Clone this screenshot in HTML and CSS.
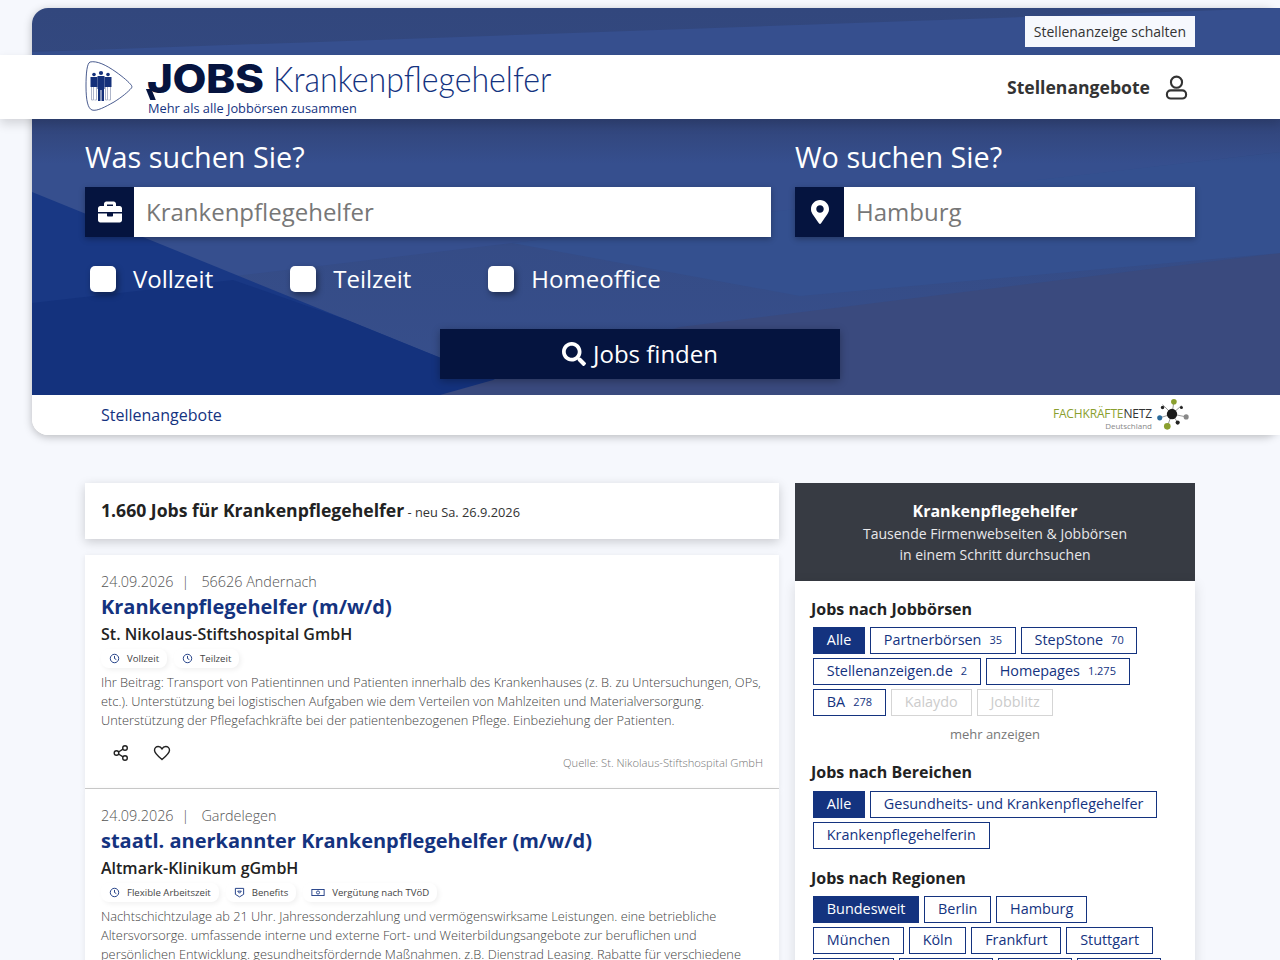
FILE: index.html
```html
<!DOCTYPE html>
<html lang="de">
<head>
<meta charset="utf-8">
<title>Jobs Krankenpflegehelfer</title>
<link rel="stylesheet" href="styles.css">
</head>
<body>
<div class="hero">
  <svg class="hero-bg" viewBox="32 8 1248 387" preserveAspectRatio="none" aria-hidden="true">
    <defs>
      <linearGradient id="top" x1="0" y1="0" x2="0" y2="1"><stop offset="0" stop-color="#32477d"/><stop offset="1" stop-color="#374f8c"/></linearGradient>
      <linearGradient id="fade" x1="0" y1="0" x2="0" y2="1"><stop offset="0" stop-color="#2f3f6f" stop-opacity=".7"/><stop offset="1" stop-color="#2f3f6f" stop-opacity="0"/></linearGradient>
    </defs>
    <rect x="32" y="8" width="1248" height="387" fill="url(#top)"/>
    <polygon points="32,52 1280,8 1280,152 32,300" fill="#364f8e"/>
    <polygon points="32,192 532,395 32,395" fill="#193884"/>
    <polygon points="32,303 233,280 347,320 532,395 32,395" fill="#14327d"/>
    <polygon points="1280,253 680,327 440,395 1280,395" fill="#3a4a7e"/>
    <polygon points="1280,152 1012,183 512,243 800,296 1280,253" fill="#34508f"/>
    <rect x="32" y="119" width="1248" height="45" fill="url(#fade)"/>
  </svg>
  <div class="topbar"><a class="post-btn">Stellenanzeige schalten</a></div>
  <header class="masthead">
    <div class="brand">
      <svg class="brand-icon" viewBox="0 0 48 50" aria-hidden="true">
        <path d="M5 1C12-.5 21 4 31 11c7 5 13 10 15.500 13.500.5 1 .5 1.500 0 2.500C43 31 37 36 29 41 20 46 12 50.500 7 49 3 47.500 1 40 1 25 1 12 2 2.500 5 1z" fill="#fff" stroke="#1c3272" stroke-width=".8"/>
        <g fill="#14307a">
          <circle cx="9" cy="13.500" r="1.800"/><path d="M5.500 16h7v10h-7z"/>
          <circle cx="23" cy="13.500" r="1.800"/><path d="M19.500 16h7v10h-7z"/>
          <circle cx="16" cy="12" r="2.100"/><path d="M12.500 15h7v13h-.5v12h-2.500V29h-1v11H13V28h-.5z"/>
        </g>
        <g fill="none" stroke="#9aa3bd" stroke-width=".8"><path d="M6.500 26v13h2v-13M9.500 39h2V26M20.500 26v13h2V26M23.500 39h2V26"/></g>
      </svg>
      <div class="brand-text">
        <div class="brand-line"><span class="brand-jobs">JOBS</span><span class="brand-name">Krankenpflegehelfer</span></div>
        <div class="brand-sub">Mehr als alle Jobbörsen zusammen</div>
      </div>
    </div>
    <nav class="mast-nav">
      <a class="mast-link">Stellenangebote</a>
      <svg class="user-icon" viewBox="0 0 24 26" aria-hidden="true"><circle cx="12" cy="7.500" r="5.800" fill="none" stroke="#333" stroke-width="2.200"/><rect x="2" y="16" width="20" height="8.500" rx="4" fill="none" stroke="#333" stroke-width="2.200"/></svg>
    </nav>
  </header>
  <section class="search">
    <div class="search-fields">
      <div class="field field-what">
        <label class="field-label">Was suchen Sie?</label>
        <div class="input-row">
          <span class="input-icon"><svg viewBox="0 0 512 512" width="24" height="24" aria-hidden="true"><path fill="#fff" d="M320 336c0 8.840-7.160 16-16 16h-96c-8.840 0-16-7.160-16-16v-48H0v144c0 25.600 22.400 48 48 48h416c25.600 0 48-22.400 48-48V288H320v48zm144-208h-80V80c0-25.600-22.400-48-48-48H176c-25.600 0-48 22.400-48 48v48H48c-25.600 0-48 22.400-48 48v80h512v-80c0-25.600-22.400-48-48-48zm-144 0H192V96h128v32z"/></svg></span>
          <span class="input-text">Krankenpflegehelfer</span>
        </div>
      </div>
      <div class="field field-where">
        <label class="field-label">Wo suchen Sie?</label>
        <div class="input-row">
          <span class="input-icon"><svg viewBox="0 0 384 512" width="18" height="24" aria-hidden="true"><path fill="#fff" d="M172.268 501.670C26.970 291.031 0 269.413 0 192 0 85.961 85.961 0 192 0s192 85.961 192 192c0 77.413-26.970 99.031-172.268 309.670-9.535 13.774-29.930 13.773-39.464 0zM192 272c44.183 0 80-35.817 80-80s-35.817-80-80-80-80 35.817-80 80 35.817 80 80 80z"/></svg></span>
          <span class="input-text">Hamburg</span>
        </div>
      </div>
    </div>
    <div class="checks">
      <div class="check"><span class="box"></span><span>Vollzeit</span></div>
      <div class="check"><span class="box"></span><span>Teilzeit</span></div>
      <div class="check"><span class="box"></span><span>Homeoffice</span></div>
    </div>
    <div class="submit-row">
      <button class="submit"><svg viewBox="0 0 512 512" width="24" height="24" aria-hidden="true"><path fill="#fff" d="M505 442.700L405.300 343c-4.500-4.500-10.600-7-17-7H372c27.600-35.300 44-79.700 44-128C416 93.100 322.900 0 208 0S0 93.100 0 208s93.100 208 208 208c48.300 0 92.700-16.400 128-44v16.300c0 6.400 2.500 12.500 7 17l99.700 99.700c9.400 9.400 24.600 9.400 33.900 0l28.300-28.300c9.400-9.400 9.400-24.600.1-34zM208 336c-70.700 0-128-57.200-128-128 0-70.700 57.200-128 128-128 70.700 0 128 57.200 128 128 0 70.700-57.200 128-128 128z"/></svg><span class="submit-label">Jobs finden</span></button>
    </div>
  </section>
  <div class="subnav">
    <a class="subnav-link">Stellenangebote</a>
    <div class="partner">
      <div class="partner-text"><div class="partner-name"><span class="green">FACHKRÄFTE</span>NETZ</div><div class="partner-sub">Deutschland</div></div>
      <svg class="partner-icon" viewBox="0 0 36 36" aria-hidden="true">
        <g stroke="#777" stroke-width=".8"><path d="M18 17L20 4M18 17L33 20M18 17L5 21M18 17L13 30M18 17L8 7M18 17L28 8M18 17L24 26"/></g>
        <circle cx="18" cy="17" r="5.500" fill="#1a1a1a"/><circle cx="20" cy="4" r="3" fill="#8a9f2e"/><circle cx="33" cy="20" r="2.700" fill="#888"/><circle cx="5" cy="21" r="2.700" fill="#2a6a9a"/><circle cx="13" cy="30" r="3.500" fill="#8a9f2e"/><circle cx="8" cy="10" r="1.800" fill="#222"/><circle cx="28" cy="10" r="1.600" fill="#222"/><circle cx="24" cy="26" r="2.200" fill="#222"/>
      </svg>
    </div>
  </div>
</div>

<main class="content">
  <div class="results">
    <div class="results-head"><strong>1.660 Jobs für Krankenpflegehelfer</strong><span class="results-new"> - neu Sa. 26.9.2026</span></div>
    <article class="job">
      <div class="job-meta"><span>24.09.2026</span><span class="sep">|</span><span>56626 Andernach</span></div>
      <h2 class="job-title">Krankenpflegehelfer (m/w/d)</h2>
      <div class="job-company">St. Nikolaus-Stiftshospital GmbH</div>
      <div class="tags">
        <span class="tag"><svg class="tag-icon" viewBox="0 0 12 12"><circle cx="6" cy="6" r="4.600"/><path d="M6 3.200V6l2 1.200"/></svg>Vollzeit</span>
        <span class="tag"><svg class="tag-icon" viewBox="0 0 12 12"><circle cx="6" cy="6" r="4.600"/><path d="M6 3.200V6l2 1.200"/></svg>Teilzeit</span>
      </div>
      <p class="job-desc">Ihr Beitrag: Transport von Patientinnen und Patienten innerhalb des Krankenhauses (z. B. zu Untersuchungen, OPs, etc.). Unterstützung bei logistischen Aufgaben wie dem Verteilen von Mahlzeiten und Materialversorgung. Unterstützung der Pflegefachkräfte bei der patientenbezogenen Pflege. Einbeziehung der Patienten.</p>
      <div class="job-foot">
        <div class="job-actions">
          <svg class="act-icon" viewBox="0 0 18 18"><circle cx="13" cy="4" r="2.300"/><circle cx="4.500" cy="9" r="2.300"/><circle cx="13" cy="14" r="2.300"/><path d="M6.500 8l4.500-2.800M6.500 10l4.500 2.800"/></svg>
          <svg class="act-icon" viewBox="0 0 18 18"><path d="M9 15.500C4 11.500 1.500 9.300 1.500 6.300 1.500 4 3.300 2.500 5.200 2.500 6.800 2.500 8.200 3.300 9 4.800 9.800 3.300 11.200 2.500 12.800 2.500 14.700 2.500 16.500 4 16.500 6.300 16.500 9.300 14 11.500 9 15.500z"/></svg>
        </div>
        <div class="job-source">Quelle: St. Nikolaus-Stiftshospital GmbH</div>
      </div>
    </article>
    <article class="job">
      <div class="job-meta"><span>24.09.2026</span><span class="sep">|</span><span>Gardelegen</span></div>
      <h2 class="job-title">staatl. anerkannter Krankenpflegehelfer (m/w/d)</h2>
      <div class="job-company">Altmark-Klinikum gGmbH</div>
      <div class="tags">
        <span class="tag"><svg class="tag-icon" viewBox="0 0 12 12"><circle cx="6" cy="6" r="4.600"/><path d="M6 3.200V6l2 1.200"/></svg>Flexible Arbeitszeit</span>
        <span class="tag"><svg class="tag-icon" viewBox="0 0 12 12"><path d="M1.500 1.500h9v6.500L6 10.800 1.500 8zM4 4.500h4L6 6.800z"/></svg>Benefits</span>
        <span class="tag"><svg class="tag-icon wide" viewBox="0 0 16 12"><rect x="1" y="2.500" width="14" height="7"/><circle cx="8" cy="6" r="1.800"/></svg>Vergütung nach TVöD</span>
      </div>
      <p class="job-desc">Nachtschichtzulage ab 21 Uhr. Jahressonderzahlung und vermögenswirksame Leistungen. eine betriebliche Altersvorsorge. umfassende interne und externe Fort- und Weiterbildungsangebote zur beruflichen und persönlichen Entwicklung. gesundheitsfördernde Maßnahmen. z.B. Dienstrad Leasing. Rabatte für verschiedene</p>
    </article>
  </div>
  <aside class="side">
    <div class="side-head">
      <div class="side-title">Krankenpflegehelfer</div>
      <div>Tausende Firmenwebseiten &amp; Jobbörsen</div>
      <div>in einem Schritt durchsuchen</div>
    </div>
    <div class="side-body">
      <section class="filter">
        <h3 class="filter-title">Jobs nach Jobbörsen</h3>
        <div class="chips">
          <a class="chip active">Alle</a>
          <a class="chip">Partnerbörsen<small>35</small></a>
          <a class="chip">StepStone<small>70</small></a>
          <a class="chip">Stellenanzeigen.de<small>2</small></a>
          <a class="chip">Homepages<small>1.275</small></a>
          <a class="chip">BA<small>278</small></a>
          <a class="chip off">Kalaydo</a>
          <a class="chip off">Jobblitz</a>
        </div>
        <div class="more">mehr anzeigen</div>
      </section>
      <section class="filter filter-areas">
        <h3 class="filter-title">Jobs nach Bereichen</h3>
        <div class="chips">
          <a class="chip active">Alle</a>
          <a class="chip">Gesundheits- und Krankenpflegehelfer</a>
          <a class="chip">Krankenpflegehelferin</a>
        </div>
      </section>
      <section class="filter">
        <h3 class="filter-title">Jobs nach Regionen</h3>
        <div class="chips">
          <a class="chip active">Bundesweit</a>
          <a class="chip">Berlin</a>
          <a class="chip">Hamburg</a>
          <a class="chip">München</a>
          <a class="chip">Köln</a>
          <a class="chip">Frankfurt</a>
          <a class="chip">Stuttgart</a>
          <a class="chip">Bremen</a>
          <a class="chip">Hannover</a>
          <a class="chip">Leipzig</a>
          <a class="chip">Dresden</a>
        </div>
      </section>
    </div>
  </aside>
</main>
</body>
</html>
```
FILE: styles.css
```css
* { box-sizing: border-box; }
html, body { margin: 0; height: 960px; overflow: hidden; }
body { background: #f6f8fd; font-family: "Open Sans", sans-serif; color: #222; padding-top: 8px; }
a { text-decoration: none; color: inherit; }

.hero { position: relative; margin-left: 32px; border-radius: 16px; box-shadow: 0 2px 8px rgba(0,0,0,.25); background: #fff; }
.hero-bg { position: absolute; left: 0; top: 0; width: 100%; height: 387px; border-radius: 16px 0 0 0; display: block; }

.topbar { position: relative; height: 47px; padding: 8px 85px 0 0; display: flex; justify-content: flex-end; align-items: flex-start; }
.post-btn { background: #f6f8fd; height: 31px; padding: 0 9px; font-size: 14px; line-height: 31px; color: #333; }

.masthead { position: relative; z-index: 1; margin-left: -32px; height: 64px; background: #fff; padding: 0 85px; display: flex; justify-content: space-between; align-items: center; box-shadow: 0 5px 10px rgba(0,0,0,.14); }
.brand { display: flex; align-items: flex-start; gap: 14px; }
.brand-icon { width: 48px; height: 50px; flex: none; margin-top: 3px; }
.brand-text { display: flex; flex-direction: column; margin-top: -4px; }
.brand-line { display: flex; align-items: baseline; height: 47px; }
.brand-jobs { position: relative; font-family: "Inter", sans-serif; font-weight: 800; font-size: 40px; line-height: 47px; color: #06143f; letter-spacing: -.4px; transform: translateY(1px) scaleX(1.1); transform-origin: left; width: 126px; flex: none; }
.brand-jobs::before { content: ""; position: absolute; left: 1px; top: 34px; width: 5px; height: 11px; background: #06143f; transform: skewX(20deg); }
.brand-name { font-family: "Lato", sans-serif; font-weight: 300; font-size: 35px; line-height: 47px; color: #14337f; white-space: nowrap; transform: scaleX(.917); transform-origin: left; }
.brand-sub { font-size: 12.800px; line-height: 16px; color: #14337f; margin: -1px 0 0 1px; }
.mast-nav { display: flex; align-items: center; gap: 15px; padding-right: 7px; }
.mast-link { font-size: 17.600px; font-weight: 700; color: #333; }
.user-icon { width: 23px; height: 25px; }

.search { position: relative; height: 276px; padding: 0 85px 0 53px; color: #fff; }
.search-fields { display: flex; gap: 24px; padding-top: 18px; }
.field-what { width: 686px; }
.field-where { width: 400px; }
.field-label { display: block; font-size: 28.800px; line-height: 40px; height: 50px; color: #fff; }
.input-row { display: flex; height: 50px; background: #fff; box-shadow: 0 2px 6px rgba(0,0,0,.3); }
.input-icon { width: 49px; flex: none; background: #05143f; display: flex; align-items: center; justify-content: center; }
.input-text { padding-left: 12px; font-size: 24px; line-height: 50px; color: #777; }
.checks { display: flex; gap: 77px; padding: 25px 0 0 5px; }
.check { display: flex; align-items: center; gap: 17px; font-size: 24px; line-height: 34px; }
.box { width: 26px; height: 26px; background: #fff; border-radius: 5px; box-shadow: 2px 3px 6px rgba(0,0,0,.4); }
.submit-row { display: flex; justify-content: center; padding: 33px 0 0; width: 1110px; }
.submit { width: 400px; height: 50px; padding: 0; background: #05143f; border: 0; color: #fff; font: 24px "Open Sans", sans-serif; display: flex; align-items: center; justify-content: center; gap: 7px; box-shadow: 0 2px 8px rgba(0,0,0,.3); }
.submit-label { margin-top: -2px; }

.subnav { position: relative; height: 40px; padding: 0 91px 0 69px; display: flex; justify-content: space-between; align-items: center; background: #fff; border-radius: 0 0 0 16px; }
.subnav-link { font-size: 16px; color: #14337f; }
.partner { display: flex; align-items: center; gap: 3px; }
.partner-text { text-align: right; line-height: 1; padding-top: 7px; }
.partner-name { font-size: 12px; color: #333; letter-spacing: -.15px; }
.green { color: #8a9f2e; }
.partner-sub { font-size: 8px; color: #888; margin-top: 2px; }
.partner-icon { width: 34px; height: 34px; }

.content { display: flex; gap: 16px; padding: 48px 85px 0; align-items: flex-start; }
.results { width: 694px; flex: none; }
.results-head { height: 56px; background: #fff; padding: 0 16px 2px; margin-bottom: 16px; display: flex; align-items: center; white-space: pre; box-shadow: 0 3px 10px rgba(0,0,0,.18); }
.results-head strong { font-size: 17.600px; font-weight: 700; color: #222; }
.results-new { font-size: 12.800px; color: #333; margin-top: 3px; }
.job { background: #fff; padding: 16px 16px 15px; border-bottom: 1px solid #ccc; height: 234.400px; box-shadow: 0 1px 6px rgba(0,0,0,.08); }
.job-meta { display: flex; font-size: 14.400px; line-height: 22px; color: #555; font-weight: 300; }
.sep { margin: 0 12px 0 8px; }
.job-title { margin: 0; font-size: 20px; line-height: 28.600px; font-weight: 700; color: #14337f; }
.job-company { font-size: 16px; line-height: 25px; font-weight: 600; color: #222; }
.tags { display: flex; gap: 7px; height: 24px; align-items: center; }
.tag { display: flex; align-items: center; gap: 7px; font-size: 9.600px; color: #444; padding: 3px 8px; border-radius: 8px; box-shadow: 2px 2px 5px rgba(0,0,0,.06); white-space: nowrap; }
.tag-icon { width: 11px; height: 11px; fill: none; stroke: #14337f; stroke-width: 1; }
.tag-icon.wide { width: 14px; }
.job-desc { margin: 0; padding-top: 2px; font-size: 12.800px; line-height: 19px; font-weight: 300; color: #444; }
.job-foot { display: flex; justify-content: space-between; align-items: flex-start; padding-top: 14px; }
.job-actions { display: flex; gap: 23px; padding-left: 11px; }
.act-icon { width: 18px; height: 18px; fill: none; stroke: #222; stroke-width: 1.400; }
.job-source { font-size: 11.200px; font-weight: 300; color: #777; padding-top: 11px; }

.side { width: 400px; flex: none; }
.side-head { height: 98px; background: #373b43; color: #e8e8ea; text-align: center; font-size: 14px; line-height: 21px; padding-top: 17px; }
.side-title { font-size: 16px; font-weight: 700; color: #fff; line-height: 23px; }
.side-body { background: #fff; padding: 16px 16px 0; box-shadow: 0 3px 12px rgba(0,0,0,.12); height: 400px; }
.filter { padding-bottom: 17px; }
.filter-title { margin: 0 0 6px; font-size: 16px; line-height: 24px; font-weight: 700; color: #222; }
.filter-areas .filter-title { margin-bottom: 7px; }
.chips { display: flex; flex-wrap: wrap; gap: 4px 5px; padding-left: 2px; }
.chip { height: 27px; line-height: 24px; padding: 0 12.800px; border: 1.500px solid #14337f; color: #14337f; font-size: 14.400px; white-space: nowrap; }
.chip small { font-size: 11px; margin-left: 8px; vertical-align: 1px; }
.chip.active { background: #14337f; color: #fff; }
.chip.off { border-color: #d5d5d5; color: #ccc; }
.more { text-align: center; font-size: 13px; line-height: 18px; color: #777; padding-top: 9px; }
```
